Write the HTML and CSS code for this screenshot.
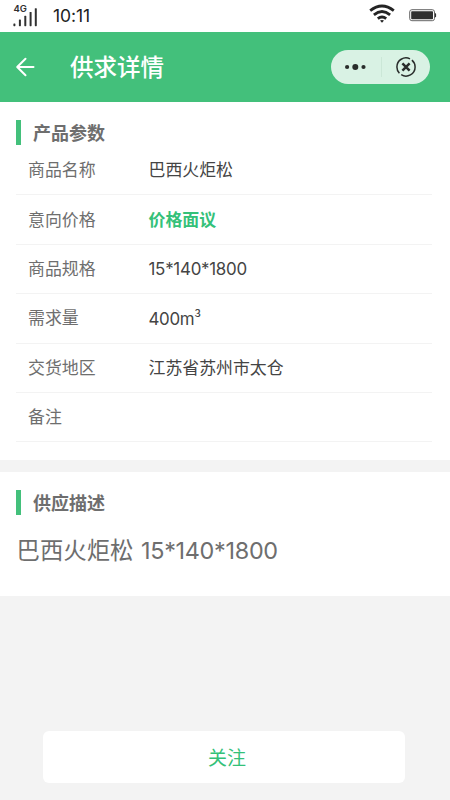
FILE: index.html
```html
<!DOCTYPE html>
<html lang="zh-CN">
<head>
<meta charset="utf-8">
<meta name="viewport" content="width=device-width, initial-scale=1">
<title>供求详情</title>
<link rel="stylesheet" href="styles.css">
</head>
<body>
<div class="status">
  <svg class="signal" width="26" height="26" viewBox="0 0 26 26" fill="#303030">
    <text class="network" x="0.5" y="8.8">4G</text>
    <rect x="0.4" y="20.4" width="2" height="2.8" rx=".6"/><rect x="5.9" y="16.5" width="2" height="6.7" rx=".6"/><rect x="11.3" y="12.8" width="2" height="10.4" rx=".6"/><rect x="16.6" y="9" width="2" height="14.2" rx=".6"/><rect x="21.8" y="5.2" width="2" height="18" rx=".6"/>
  </svg>
  <span class="clock">10:11</span>
  <svg class="wifi" width="26" height="19" viewBox="0 0 26 19" fill="none" stroke="#242424" stroke-width="2.8">
    <path d="M1.2 6.7Q13-2.6 24.8 6.7M4.9 10.8Q13 4.2 21.1 10.8M8.8 14.6Q13 11.4 17.2 14.6"/><path d="M11 16.6Q13 15.2 15 16.6L13 18.8Z" fill="#242424" stroke="none"/>
  </svg>
  <svg class="battery" width="28" height="13" viewBox="0 0 28 13">
    <rect x=".7" y=".7" width="24.8" height="11" rx="2.2" fill="none" stroke="#666"/><rect x="2.2" y="2.2" width="21.8" height="8" rx=".8" fill="#303030"/><path d="M26 4.2h.5q.6 0 .6.7v2.6q0 .7-.6.7H26Z" fill="#333"/>
  </svg>
</div>
<header class="navbar">
  <svg class="back" width="20" height="20" viewBox="0 0 20 20" fill="none" stroke="#fff" stroke-width="2" stroke-linecap="round" stroke-linejoin="round"><path d="M9.5 1.8 1.2 10l8.3 8.2M1.4 10h16.1"/></svg>
  <h1>供求详情</h1>
  <div class="capsule">
    <svg width="22" height="8" viewBox="0 0 22 8" fill="#292d2b"><circle cx="2.1" cy="4" r="2.1"/><circle cx="10.3" cy="4" r="3"/><circle cx="18.5" cy="4" r="2.1"/></svg>
    <i class="separator"></i>
    <svg width="20" height="20" viewBox="0 0 20 20" fill="none" stroke="#292d2b"><path stroke-width="1.5" d="M3.4 16.3A9.1 9.1 0 0 1 .9 10A9.1 9.1 0 0 1 14 1.8M15.9 3.1A9.1 9.1 0 0 1 19.1 10A9.1 9.1 0 0 1 5.2 17.7"/><path stroke-width="2.5" d="m6.4 6.4 7.2 7.2m0-7.2-7.2 7.2"/></svg>
  </div>
</header>
<main>
  <section class="params">
    <h2>产品参数</h2>
    <dl>
      <div><dt>商品名称</dt><dd>巴西火炬松</dd></div>
      <div><dt>意向价格</dt><dd class="price">价格面议</dd></div>
      <div><dt>商品规格</dt><dd class="size">15*140*1800</dd></div>
      <div><dt>需求量</dt><dd class="amount">400m<span class="cubed">³</span></dd></div>
      <div><dt>交货地区</dt><dd>江苏省苏州市太仓</dd></div>
      <div><dt>备注</dt><dd></dd></div>
    </dl>
  </section>
  <section class="description">
    <h2>供应描述</h2>
    <p>巴西火炬松 <span>15*140*1800</span></p>
  </section>
</main>
<footer><button class="follow">关注</button></footer>
</body>
</html>
```
FILE: styles.css
```css
* { box-sizing: border-box; }
body {
  margin: 0;
  height: 800px;
  display: flex;
  flex-direction: column;
  overflow: hidden;
  background: #f3f3f3;
  color: #6e6e6e;
  font-family: Inter, "Noto Sans CJK SC", sans-serif;
}
h1, h2, dl, dd, p { margin: 0; font-weight: 400; }
svg { display: block; flex: none; overflow: visible; }
.status { height: 32px; flex: none; display: flex; align-items: center; padding: 0 13px; background: #fff; }
.network { font: 600 9.5px Inter, sans-serif; }
.clock { margin-left: 14px; font-size: 17.5px; line-height: 32px; letter-spacing: -.1px; color: #222; }
.wifi { margin-left: auto; margin-top: -5px; }
.battery { margin-left: 14px; margin-top: -1px; }
.navbar { height: 70px; flex: none; display: flex; align-items: center; padding: 0 20px 0 16px; background: #43c07b; color: #fff; }
h1 { margin-left: 34px; padding-top: 2px; font-size: 23.5px; font-weight: 500; line-height: 34px; }
.capsule { width: 99.5px; height: 34px; margin-left: auto; border-radius: 17px; display: flex; align-items: center; padding: 0 14.5px 0 14px; justify-content: space-between; background: #d9f2e4; }
.separator { width: 1px; height: 20px; background: #cbe7d7; }
section { background: #fff; padding: 18px 18px 0 15.5px; }
.params { height: 358px; }
h2 { display: flex; height: 25px; font-size: 18px; line-height: 27px; font-weight: 700; }
h2::before { content: ""; width: 5px; height: 25px; margin-right: 12.5px; background: #43c07b; }
dl > div { height: 49.4px; display: flex; align-items: center; border-bottom: 1px solid #f3f3f3; padding-left: 12.5px; font-size: 16.9px; line-height: 24px; }
dl { margin-top: 1px; }
dt { width: 120.5px; }
dd { color: #444; }
.price { color: #34c179; font-weight: 700; }
.size { letter-spacing: -.25px; }
.amount { letter-spacing: -.3px; }
.cubed { font-family: "Noto Sans CJK SC", sans-serif; }
.description { margin-top: 12px; height: 124px; }
.description p { margin-top: 19px; padding-left: 1px; font-size: 23.4px; line-height: 34px; }
.description p span { margin-left: 1px; letter-spacing: -.3px; }
footer { margin-top: auto; padding: 0 45px 17px 43px; }
.follow { display: block; width: 100%; height: 52px; border: 0; border-radius: 6px; padding: 0 0 2px 6px; background: #fff; color: #34c179; font: 400 19px "Noto Sans CJK SC", sans-serif; }
```
